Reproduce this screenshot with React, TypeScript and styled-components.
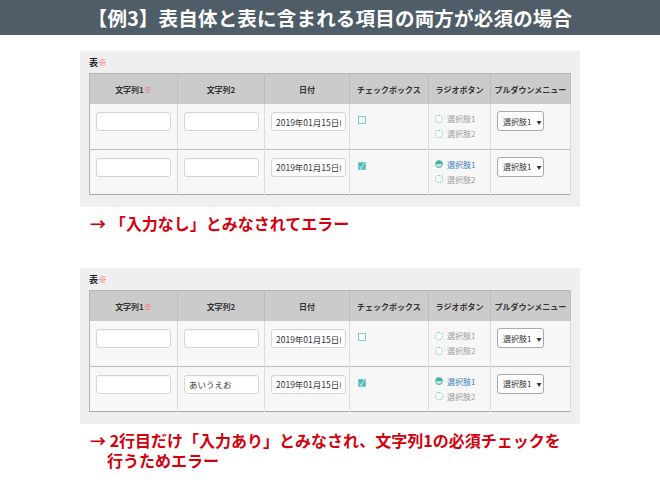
import styled, { createGlobalStyle } from 'styled-components';

const GlobalStyle = createGlobalStyle`
  html, body {
    margin: 0;
    padding: 0;
    background: #ffffff;
  }
  body {
    width: 660px;
    height: 490px;
    overflow: hidden;
    font-family: "Noto Sans CJK JP", "Noto Sans", sans-serif;
  }
`;

const Page = styled.div`
  width: 660px;
  height: 490px;
  display: flex;
  flex-direction: column;
`;

const TitleBar = styled.div`
  height: 35px;
  background: #4e5d67;
  color: #ffffff;
  display: flex;
  align-items: center;
  justify-content: center;
  font-size: 19.5px;
  font-weight: 700;
  letter-spacing: 0.2px;
`;

const Section = styled.div<{ $top: number }>`
  margin-top: ${(p) => p.$top}px;
  padding-left: 80px;
  display: flex;
  flex-direction: column;
`;

const Panel = styled.div`
  width: 500px;
  height: 156px;
  box-sizing: border-box;
  background: #efefef;
  padding: 4px 9px 0 9px;
  display: flex;
  flex-direction: column;
`;

const PanelLabel = styled.div`
  font-size: 9px;
  font-weight: 700;
  color: #222;
  height: 18px;
  line-height: 10px;
  padding-top: 3px;
  box-sizing: border-box;
`;

const Req = styled.span`
  color: #ff4a55;
  font-weight: 400;
`;

const Table = styled.table`
  border-collapse: collapse;
  table-layout: fixed;
  width: 481px;
  background: #f7f7f7;
  border: 1px solid #b4b4b4;
  border-bottom: 1.5px solid #a8a8a8;
`;

const Col = styled.col<{ $w: number }>`
  width: ${(p) => p.$w}px;
`;

const Th = styled.th`
  height: 30px;
  padding: 0;
  background: #cbcbcb;
  border-right: 1px solid #bcbcbc;
  font-size: 8px;
  font-weight: 700;
  color: #333;
  text-align: center;
  vertical-align: middle;
  white-space: nowrap;
  overflow: hidden;
`;

const Tr = styled.tr`
  height: 45px;
  & + & td {
    border-top: 1px solid #bdbdbd;
  }
`;

const Td = styled.td`
  padding: 0 0 0 6px;
  border-right: 1px solid #dcdcdc;
  vertical-align: top;
  box-sizing: border-box;
  overflow: hidden;
`;

const TextInput = styled.input`
  display: block;
  width: 75px;
  height: 19px;
  margin-top: 8px;
  box-sizing: border-box;
  border: 1px solid #d6d6d6;
  border-radius: 3px;
  background: #ffffff;
  box-shadow: inset 0 1px 1px rgba(0, 0, 0, 0.04);
  padding: 0 4px;
  font-family: "Noto Sans CJK JP", sans-serif;
  font-size: 8.5px;
  color: #333;
  outline: none;
`;

const Check = styled.span<{ $on?: boolean }>`
  display: block;
  width: 8px;
  height: 8px;
  margin-top: 12px;
  margin-left: 2px;
  box-sizing: border-box;
  border: 1px solid #7fcdd3;
  background: ${(p) => (p.$on ? '#4bb8b0' : '#ffffff')};
  color: #fff;
  font-size: 8px;
  line-height: 6px;
  text-align: center;
`;

const RadioList = styled.div`
  display: flex;
  flex-direction: column;
  gap: 6px;
  margin-top: 10px;
`;

const RadioItem = styled.div<{ $on?: boolean }>`
  display: flex;
  align-items: center;
  gap: 4px;
  font-size: 8px;
  line-height: 9px;
  color: ${(p) => (p.$on ? '#3d82c4' : '#a0a0a0')};
`;

const RadioDot = styled.span<{ $on?: boolean }>`
  width: 8px;
  height: 8px;
  box-sizing: border-box;
  border-radius: 50%;
  border: 1px ${(p) => (p.$on ? 'solid' : 'dotted')} #55bfb3;
  background: ${(p) =>
    p.$on ? 'linear-gradient(#3fb29c 0 55%, #bfe6de 55% 100%)' : '#ffffff'};
  flex: none;
`;

const SelectBox = styled.div`
  display: flex;
  align-items: center;
  width: 47px;
  height: 20px;
  margin-top: 7px;
  box-sizing: border-box;
  border: 1px solid #a9a9a9;
  border-radius: 3px;
  background: #ffffff;
  padding: 0 0 0 5px;
  font-size: 8px;
  color: #333;
  white-space: nowrap;
`;

const Caret = styled.span`
  font-size: 5px;
  margin-left: 5px;
  color: #333;
`;

const Note = styled.div`
  margin-top: 6px;
  padding-left: 10px;
  color: #d4000d;
  font-size: 16px;
  font-weight: 700;
  line-height: 20px;
`;

const NoteLine = styled.div<{ $indent?: boolean }>`
  padding-left: ${(p) => (p.$indent ? '17px' : '0')};
  white-space: nowrap;
`;

type RowData = {
  col2: string;
  checked: boolean;
  radio: 1 | 0;
};

const cols = [
  { label: '文字列1', req: true, w: 88 },
  { label: '文字列2', req: false, w: 87 },
  { label: '日付', req: false, w: 85 },
  { label: 'チェックボックス', req: false, w: 79 },
  { label: 'ラジオボタン', req: false, w: 62 },
  { label: 'プルダウンメニュー', req: false, w: 80 },
];

const FormTable = ({ rows }: { rows: RowData[] }) => (
  <Panel>
    <PanelLabel>
      表<Req>※</Req>
    </PanelLabel>
    <Table>
      <colgroup>
        {cols.map((c) => (
          <Col key={c.label} $w={c.w} />
        ))}
      </colgroup>
      <thead>
        <tr>
          {cols.map((c) => (
            <Th key={c.label}>
              {c.label}
              {c.req && <Req>※</Req>}
            </Th>
          ))}
        </tr>
      </thead>
      <tbody>
        {rows.map((r, i) => (
          <Tr key={i}>
            <Td>
              <TextInput readOnly defaultValue="" />
            </Td>
            <Td>
              <TextInput readOnly defaultValue={r.col2} />
            </Td>
            <Td>
              <TextInput readOnly defaultValue="2019年01月15日(土)" />
            </Td>
            <Td>
              <Check $on={r.checked}>{r.checked ? '✓' : ''}</Check>
            </Td>
            <Td>
              <RadioList>
                <RadioItem $on={r.radio === 1}>
                  <RadioDot $on={r.radio === 1} />
                  選択肢1
                </RadioItem>
                <RadioItem>
                  <RadioDot />
                  選択肢2
                </RadioItem>
              </RadioList>
            </Td>
            <Td>
              <SelectBox>
                選択肢1<Caret>▼</Caret>
              </SelectBox>
            </Td>
          </Tr>
        ))}
      </tbody>
    </Table>
  </Panel>
);

export default function App() {
  return (
    <Page>
      <GlobalStyle />
      <TitleBar>【例3】表自体と表に含まれる項目の両方が必須の場合</TitleBar>
      <Section $top={16}>
        <FormTable
          rows={[
            { col2: '', checked: false, radio: 0 },
            { col2: '', checked: true, radio: 1 },
          ]}
        />
        <Note>
          <NoteLine>→ 「入力なし」とみなされてエラー</NoteLine>
        </Note>
      </Section>
      <Section $top={35}>
        <FormTable
          rows={[
            { col2: '', checked: false, radio: 0 },
            { col2: 'あいうえお', checked: true, radio: 1 },
          ]}
        />
        <Note>
          <NoteLine>→ 2行目だけ「入力あり」とみなされ、文字列1の必須チェックを</NoteLine>
          <NoteLine $indent>行うためエラー</NoteLine>
        </Note>
      </Section>
    </Page>
  );
}
